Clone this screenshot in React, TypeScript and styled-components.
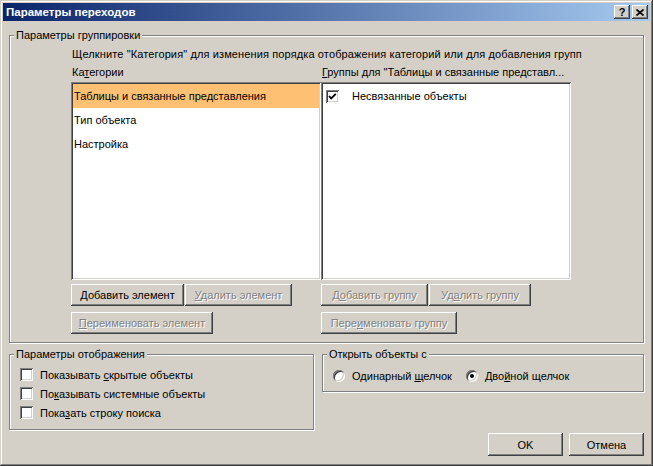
import React from 'react';
import styled, { createGlobalStyle } from 'styled-components';

const FACE = '#d4d0c8';

const GlobalStyle = createGlobalStyle`
  html, body {
    margin: 0;
    padding: 0;
    background: ${FACE};
  }
  body {
    font-family: "Liberation Sans", Arial, sans-serif;
    font-size: 11px;
    color: #000;
  }
  * {
    box-sizing: border-box;
  }
`;

const raised = `
  box-shadow:
    inset -1px -1px 0 #404040,
    inset 1px 1px 0 #ffffff,
    inset -2px -2px 0 #808080,
    inset 2px 2px 0 ${FACE};
`;

const sunken = `
  box-shadow:
    inset 1px 1px 0 #808080,
    inset -1px -1px 0 #ffffff,
    inset 2px 2px 0 #404040,
    inset -2px -2px 0 ${FACE};
`;

const Window = styled.div`
  width: 653px;
  height: 466px;
  padding: 3px;
  display: flex;
  flex-direction: column;
  background: ${FACE};
  box-shadow:
    inset -1px -1px 0 #404040,
    inset 1px 1px 0 ${FACE},
    inset -2px -2px 0 #808080,
    inset 2px 2px 0 #ffffff;
`;

const TitleBar = styled.div`
  height: 18px;
  display: flex;
  align-items: center;
  padding: 0 2px 0 3px;
  background: linear-gradient(to right, #0a246a, #a6caf0);
`;

const TitleText = styled.div`
  flex: 1;
  color: #fff;
  font-weight: bold;
  font-size: 11.5px;
  white-space: nowrap;
`;

const CaptionButtons = styled.div`
  display: flex;
  gap: 2px;
`;

const CaptionButton = styled.div`
  width: 16px;
  height: 14px;
  display: flex;
  align-items: center;
  justify-content: center;
  background: ${FACE};
  font-weight: bold;
  font-size: 11px;
  line-height: 14px;
  ${raised}
`;

const Body = styled.div`
  flex: 1;
  display: flex;
  flex-direction: column;
  padding: 14px 6px 0 6px;
`;

const GroupBox = styled.div<{ $width?: number; $height?: number }>`
  position: relative;
  width: ${(p) => (p.$width ? `${p.$width}px` : 'auto')};
  height: ${(p) => (p.$height ? `${p.$height}px` : 'auto')};
  border: 1px solid #808080;
  box-shadow: inset 1px 1px 0 #fff, 1px 1px 0 #fff;
`;

const GroupLabel = styled.div`
  position: absolute;
  top: -7px;
  left: 4px;
  padding: 0 2px;
  line-height: 13px;
  background: ${FACE};
  white-space: nowrap;
`;

const GroupingContent = styled.div`
  padding: 12px 0 8px 61px;
`;

const Hint = styled.div`
  line-height: 13px;
  padding-left: 1px;
  letter-spacing: 0.12px;
  white-space: nowrap;
`;

const Columns = styled.div`
  display: flex;
`;

const Column = styled.div`
  width: 250px;
  display: flex;
  flex-direction: column;
`;

const ColumnLabel = styled.div`
  margin: 5px 0 3px;
  padding-left: 1px;
  line-height: 13px;
  white-space: nowrap;
`;

const ListBox = styled.div`
  height: 198px;
  padding: 2px;
  background: #fff;
  ${sunken}
`;

const ListItem = styled.div<{ $selected?: boolean }>`
  height: 24px;
  display: flex;
  align-items: center;
  gap: 13px;
  padding-left: ${(p) => (p.$selected !== undefined ? '1px' : '3px')};
  background: ${(p) => (p.$selected ? '#fec073' : 'transparent')};
  white-space: nowrap;
`;

const ButtonRow = styled.div<{ $first?: boolean }>`
  display: flex;
  gap: 1px;
  margin-top: ${(p) => (p.$first ? '4px' : '6px')};
`;

const Button = styled.div<{ $width: number; $height?: number; $disabled?: boolean }>`
  width: ${(p) => p.$width}px;
  height: ${(p) => p.$height ?? 22}px;
  display: flex;
  align-items: center;
  justify-content: center;
  background: ${FACE};
  white-space: pre;
  color: ${(p) => (p.$disabled ? '#808080' : '#000')};
  text-shadow: ${(p) => (p.$disabled ? '1px 1px 0 #fff' : 'none')};
  ${raised}
`;

const Key = styled.span`
  text-decoration: underline;
`;

const BottomRow = styled.div`
  display: flex;
  align-items: flex-start;
  gap: 8px;
  margin-top: 11px;
`;

const OptionsList = styled.div`
  padding: 10px 0 7px 10px;
`;

const OptionRow = styled.div`
  height: 19px;
  display: flex;
  align-items: center;
  gap: 7px;
  white-space: nowrap;
`;

const RadioRow = styled.div`
  padding: 11px 0 6px 10px;
  height: 100%;
  display: flex;
  align-items: center;
  gap: 14px;
`;

const CheckBox = styled.div`
  width: 13px;
  height: 13px;
  flex: none;
  display: flex;
  align-items: center;
  justify-content: center;
  background: #fff;
  ${sunken}
`;

const Radio = styled.div<{ $checked?: boolean }>`
  position: relative;
  width: 12px;
  height: 12px;
  flex: none;
  border-radius: 50%;
  background: #fff;
  ${sunken}

  &::after {
    content: '';
    display: ${(p) => (p.$checked ? 'block' : 'none')};
    position: absolute;
    left: 4px;
    top: 4px;
    width: 4px;
    height: 4px;
    border-radius: 50%;
    background: #000;
  }
`;

const Footer = styled.div`
  display: flex;
  justify-content: flex-end;
  gap: 6px;
  margin-top: 3px;
`;

const CloseGlyph = () => (
  <svg width="8" height="7" viewBox="0 0 8 7">
    <path d="M0.5 0.5 L7.5 6.5 M7.5 0.5 L0.5 6.5" stroke="#000" strokeWidth="1.6" fill="none" />
  </svg>
);

const CheckGlyph = () => (
  <svg width="9" height="9" viewBox="0 0 9 9">
    <polyline points="1,4 3.2,6.4 7.8,1.8" stroke="#000" strokeWidth="1.8" fill="none" />
  </svg>
);

export default function App() {
  return (
    <>
      <GlobalStyle />
      <Window>
        <TitleBar>
          <TitleText>Параметры переходов</TitleText>
          <CaptionButtons>
            <CaptionButton>?</CaptionButton>
            <CaptionButton>
              <CloseGlyph />
            </CaptionButton>
          </CaptionButtons>
        </TitleBar>
        <Body>
          <GroupBox>
            <GroupLabel>Параметры группировки</GroupLabel>
            <GroupingContent>
              <Hint>
                Щелкните "Категория" для изменения порядка отображения категорий или для добавления групп
              </Hint>
              <Columns>
                <Column>
                  <ColumnLabel>
                    Ка<Key>т</Key>егории
                  </ColumnLabel>
                  <ListBox>
                    <ListItem $selected>Таблицы и связанные представления</ListItem>
                    <ListItem $selected={false}>Тип объекта</ListItem>
                    <ListItem $selected={false}>Настройка</ListItem>
                  </ListBox>
                  <ButtonRow $first>
                    <Button $width={113}>
                      <span>
                        <Key>Д</Key>обавить элемент
                      </span>
                    </Button>
                    <Button $width={107} $disabled>
                      <span>
                        <Key>У</Key>далить элемент
                      </span>
                    </Button>
                  </ButtonRow>
                  <ButtonRow>
                    <Button $width={142} $disabled>
                      <span>
                        <Key>П</Key>ереименовать элемент
                      </span>
                    </Button>
                  </ButtonRow>
                </Column>
                <Column>
                  <ColumnLabel>
                    <Key>Г</Key>руппы для "Таблицы и связанные представл...
                  </ColumnLabel>
                  <ListBox>
                    <ListItem>
                      <CheckBox>
                        <CheckGlyph />
                      </CheckBox>
                      <span>Несвязанные объекты</span>
                    </ListItem>
                  </ListBox>
                  <ButtonRow $first>
                    <Button $width={107} $disabled>
                      <span>
                        Д<Key>о</Key>бавить группу
                      </span>
                    </Button>
                    <Button $width={102} $disabled>
                      <span>
                        Уд<Key>а</Key>лить группу
                      </span>
                    </Button>
                  </ButtonRow>
                  <ButtonRow>
                    <Button $width={136} $disabled>
                      <span>
                        Пере<Key>и</Key>меновать группу
                      </span>
                    </Button>
                  </ButtonRow>
                </Column>
              </Columns>
            </GroupingContent>
          </GroupBox>
          <BottomRow>
            <GroupBox $width={305}>
              <GroupLabel>Параметры отображения</GroupLabel>
              <OptionsList>
                <OptionRow>
                  <CheckBox />
                  <span>
                    Показывать <Key>с</Key>крытые объекты
                  </span>
                </OptionRow>
                <OptionRow>
                  <CheckBox />
                  <span>
                    По<Key>к</Key>азывать системные объекты
                  </span>
                </OptionRow>
                <OptionRow>
                  <CheckBox />
                  <span>
                    Пока<Key>з</Key>ать строку поиска
                  </span>
                </OptionRow>
              </OptionsList>
            </GroupBox>
            <GroupBox $width={322} $height={38}>
              <GroupLabel>Открыть объекты с</GroupLabel>
              <RadioRow>
                <OptionRow>
                  <Radio />
                  <span>
                    Одинарный <Key>щ</Key>елчок
                  </span>
                </OptionRow>
                <OptionRow>
                  <Radio $checked />
                  <span>
                    Дво<Key>й</Key>ной щелчок
                  </span>
                </OptionRow>
              </RadioRow>
            </GroupBox>
          </BottomRow>
          <Footer>
            <Button $width={75} $height={23}>
              OK
            </Button>
            <Button $width={75} $height={23}>
              Отмена
            </Button>
          </Footer>
        </Body>
      </Window>
    </>
  );
}
